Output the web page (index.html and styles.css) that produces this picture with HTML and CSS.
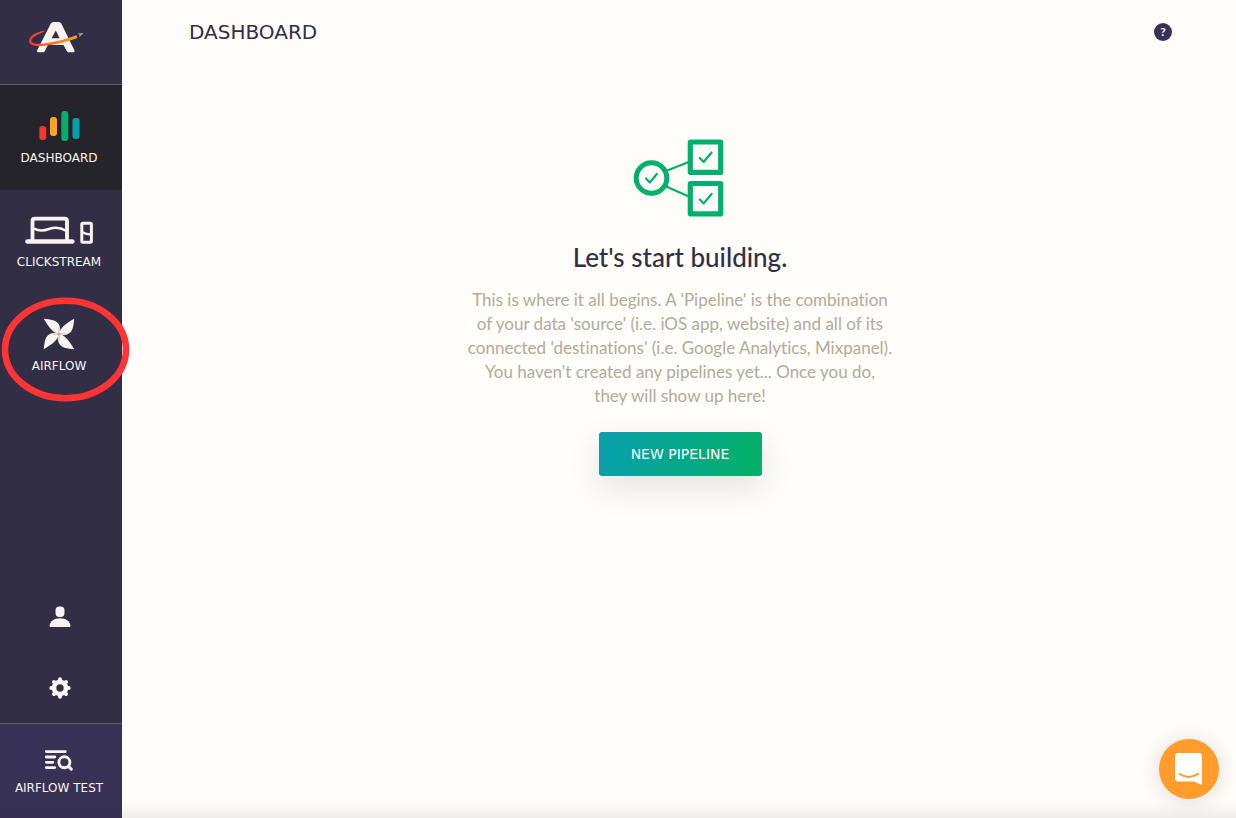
FILE: index.html
```html
<!DOCTYPE html>
<html lang="en">
<head>
<meta charset="utf-8">
<meta name="viewport" content="width=device-width, initial-scale=1">
<title>Dashboard</title>
<link rel="stylesheet" href="styles.css">
</head>
<body>
<div class="app">
  <nav class="sidebar" aria-label="Main">
    <a class="brand" href="#" aria-label="Home">
      <svg width="56" height="34" viewBox="28 20 56 34" fill="none">
        <defs><linearGradient id="orbit" x1="29" y1="0" x2="77" y2="0" gradientUnits="userSpaceOnUse"><stop stop-color="#f9332f"/><stop offset=".3" stop-color="#fb5a2c"/><stop offset="1" stop-color="#ffa32b"/></linearGradient></defs>
        <path fill="#f6f2ec" fill-rule="evenodd" d="M53.500 22h5.200q1.800 0 2.600 1.600L74.500 50.500q.6 1.800-1 1.800h-4.800q-1.400 0-2-1.300L63.500 45H47.800L44.900 51q-.6 1.300-2 1.300H38q-1.600 0-.9-1.800L50.800 23.600Q51.600 22 53.500 22zM55.800 30.500L51.600 38.300H59.600z"/>
        <path fill="url(#orbit)" d="M44.200 30.800C35 32.500 28.600 36.500 29 41.500c.5 4.800 8 5 16 4.200 12-1.200 23-4 32.500-7.600l-1.200-2.800C67 39 57 41.800 46 43.200c-7 .9-13.500 1.100-14.500-1.700-1-3.500 6-7.500 12.700-9.800z"/>
        <path fill="#aaa39b" d="M77.500 33.500L83.600 33l-4.400 4.200.2-2.500z"/>
      </svg>
    </a>
    <a class="nav-item nav-item-active" href="#" aria-current="page">
      <svg width="42" height="32" viewBox="38 110 42 32">
        <rect x="39.300" y="126" width="7" height="14" rx="3" fill="#f9352f"/>
        <rect x="50" y="117" width="7" height="19" rx="3" fill="#ff9f2c"/>
        <rect x="61.300" y="111" width="7" height="30" rx="3" fill="#04ae6d"/>
        <rect x="72.500" y="118" width="7" height="21" rx="3" fill="#089fae"/>
      </svg>
      <span class="nav-label">DASHBOARD</span>
    </a>
    <a class="nav-item" href="#">
      <svg width="70" height="32" viewBox="24 214 70 32" fill="none" stroke="#f8f5f0">
        <path stroke-width="3.800" d="M32.500 241V221q0-2.300 2.500-2.300h29.500q2.500 0 2.500 2.300v20"/>
        <path stroke-width="4.600" stroke-linecap="round" d="M27.500 241.500h44.800"/>
        <path stroke-width="2.500" d="M34 228.500c5 3 9 2.700 15 .5s11-2 17 1.800"/>
        <rect x="81.800" y="223.200" width="9.600" height="19" rx="1" stroke-width="3"/>
        <path stroke-width="2.500" d="M82 232q4 2.500 9 2.500"/>
      </svg>
      <span class="nav-label">CLICKSTREAM</span>
    </a>
    <a class="nav-item" href="#">
      <svg width="32" height="32" viewBox="-16 -16 32 32">
        <defs><g id="blade"><path fill="#f8f5f0" d="M-15.200-15.200C-9-14.600-1.500-14 .3-8.500Q1.200-4 0 0C-5-1-9.500-5-15.200-15.200z"/><path fill="#ddd7ce" d="M.3-8.500Q2.500-4 0 0-2.800-3.500.3-8.500z"/></g></defs>
        <use href="#blade"/><use href="#blade" transform="rotate(90)"/><use href="#blade" transform="rotate(180)"/><use href="#blade" transform="rotate(270)"/>
        <circle r="1.500" fill="#b9b2aa"/>
      </svg>
      <span class="nav-label">AIRFLOW</span>
      <svg class="highlight" width="132" height="108" viewBox="0 295 132 108" fill="none" aria-hidden="true"><ellipse cx="65.500" cy="349.500" rx="60.500" ry="48.700" stroke="#fe3435" stroke-width="6.600"/></svg>
    </a>
    <div class="tools">
      <a class="tool" href="#" aria-label="Account">
        <svg width="22" height="22" viewBox="0 0 22 22" fill="#f8f5f0"><rect x="6.500" y="0.500" width="9" height="10.500" rx="4"/><path d="M.5 20C1 15 5.500 12.300 11 12.300S21 15 21.500 20q0 1-1 1h-19q-1 0-1-1z"/></svg>
      </a>
      <a class="tool" href="#" aria-label="Settings">
        <svg width="22" height="22" viewBox="0 0 22 22" fill="none" stroke="#f8f5f0"><circle cx="11" cy="11" r="6" stroke-width="4.600"/><path stroke-width="4" stroke-linecap="round" d="M11 4V2.300M11 18v1.700M4 11H2.300M18 11h1.700M6 6L5 5M16 6l1-1M6 16l-1 1M16 16l1 1"/></svg>
      </a>
    </div>
    <a class="workspace" href="#">
      <svg width="30" height="24" viewBox="44 748 30 24" fill="none" stroke="#f8f5f0" stroke-linecap="round">
        <path stroke-width="2.800" d="M46.300 751.600h19M46.300 757h8.500M46.300 762.300h6.500M46.300 767.600h8.500"/>
        <circle cx="64.400" cy="762.300" r="5.500" stroke-width="2.900"/><path stroke-width="3" d="M68.500 766.500l2.800 2.700"/>
      </svg>
      <span class="nav-label">AIRFLOW TEST</span>
    </a>
  </nav>
  <div class="content">
    <header class="topbar">
      <h1 class="page-title">DASHBOARD</h1>
      <button class="help" type="button" aria-label="Help">?</button>
    </header>
    <main class="empty">
      <svg class="empty-art" width="96" height="80" viewBox="632 138 96 80" fill="none" stroke="#04ae6d">
        <path stroke-width="2.200" d="M666 171l24-9.500M666 186.500l24 10.500"/>
        <circle cx="651.500" cy="178" r="15.300" stroke-width="5"/>
        <rect x="690.300" y="142" width="30.400" height="30.400" rx=".5" stroke-width="5.200"/>
        <rect x="690.300" y="183.500" width="30.400" height="30.400" rx=".5" stroke-width="5.200"/>
        <path stroke-width="2.200" stroke-linecap="round" stroke-linejoin="round" d="M646 178.500l3.800 4 7-8.500M699.800 158l3.800 4 8-9.500M699.800 199.500l3.800 4 8-9.500"/>
      </svg>
      <h2 class="empty-title">Let's start building.</h2>
      <p class="empty-text">This is where it all begins. A 'Pipeline' is the combination<br>of your data 'source' (i.e. iOS app, website) and all of its<br>connected 'destinations' (i.e. Google Analytics, Mixpanel).<br>You haven't created any pipelines yet... Once you do,<br>they will show up here!</p>
      <button class="primary" type="button">NEW PIPELINE</button>
    </main>
  </div>
</div>
<div class="bottom-shade"></div>
<button class="chat" type="button" aria-label="Open chat">
  <svg width="30" height="32" viewBox="0 0 30 32"><path fill="#fff" d="M4 0h21q3 0 3 3v29l-8-3.500H4q-3 0-3-3V3q0-3 3-3z"/><path fill="none" stroke="#ff9f2c" stroke-width="2" stroke-linecap="round" d="M5.500 20.800q9 6.500 18.500 0"/></svg>
</button>
</body>
</html>
```
FILE: styles.css
```css
* { box-sizing: border-box; }
body {
  margin: 0;
  background: #fefdf9;
  color: #322e46;
  font-family: Lato, "Open Sans", sans-serif;
}
h1, h2, p { margin: 0; }
svg { display: block; flex: none; }
a { color: inherit; text-decoration: none; }
button { border: 0; padding: 0; font: inherit; cursor: pointer; }

.app { display: flex; min-height: 100vh; }
.sidebar {
  display: flex;
  flex-direction: column;
  flex: none;
  width: 122px;
  background: #322e46;
  color: #f8f5f0;
}
.brand {
  display: flex;
  justify-content: center;
  padding: 20px 10px 30px 0;
  border-bottom: 1px solid #62605f;
}
.nav-item, .workspace {
  display: flex;
  flex-direction: column;
  align-items: center;
  gap: 8px;
  padding-right: 4px;
}
.nav-item {
  position: relative;
  height: 104px;
  padding-top: 24px;
}
.nav-item-active {
  height: 105px;
  padding-top: 25px;
  background: #25242a;
}
.nav-label {
  font: 12px/16px "DejaVu Sans", sans-serif;
  white-space: nowrap;
}
.highlight {
  position: absolute;
  top: 1px;
  left: 0;
  z-index: 2;
  pointer-events: none;
}
.tools {
  display: flex;
  flex-direction: column;
  align-items: center;
  gap: 49px;
  margin-top: auto;
  padding: 24px 3px 24px 0;
}
.workspace {
  height: 95px;
  padding-top: 24px;
  border-top: 1px solid #62605f;
  background: #373155;
}

.content { flex: 1; min-width: 0; }
.topbar {
  display: flex;
  align-items: center;
  justify-content: space-between;
  height: 64px;
  padding: 0 64px 0 67px;
}
.page-title { font: 20px/24px "DejaVu Sans", sans-serif; }
.help {
  width: 18px;
  height: 18px;
  border-radius: 50%;
  background: #373155;
  color: #fff;
  font: bold 12px/18px Lato, sans-serif;
}
.empty {
  display: flex;
  flex-direction: column;
  align-items: center;
  padding: 74px 16px 64px 18px;
  text-align: center;
}
.empty-title {
  margin-top: 23px;
  font-size: 26px;
  font-weight: 500;
  line-height: 32px;
}
.empty-text {
  margin-top: 15px;
  color: #b3aa9e;
  font-size: 17px;
  font-variant-ligatures: none;
  line-height: 24px;
}
.primary {
  margin-top: 24px;
  min-width: 163px;
  height: 44px;
  padding: 0 20px;
  border-radius: 3px;
  background: linear-gradient(100deg, #089fae, #04ae6d 90%);
  box-shadow: 0 12px 32px rgba(50, 40, 50, .12);
  color: #fff;
  font: 14px/20px "DejaVu Sans", sans-serif;
}
.bottom-shade {
  position: fixed;
  inset: auto 0 0;
  height: 16px;
  background: linear-gradient(transparent, rgba(40, 30, 30, .07));
  pointer-events: none;
}
.chat {
  position: fixed;
  right: 17px;
  bottom: 19px;
  display: grid;
  place-items: center;
  width: 60px;
  height: 60px;
  border-radius: 50%;
  background: #ff9c2c;
  box-shadow: 0 2px 20px rgba(50, 40, 40, .16);
}
```
